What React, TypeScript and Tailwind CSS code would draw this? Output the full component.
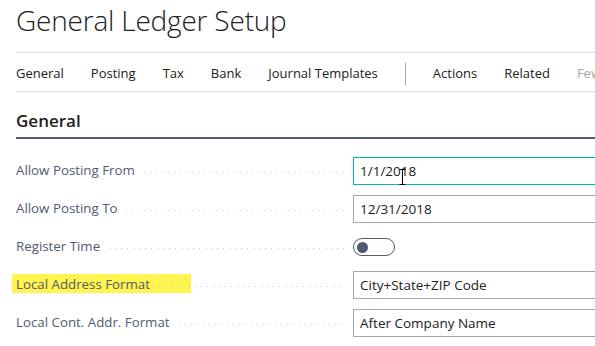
import React from "react";

const Dots = () => (
  <span className="flex-1 h-[1px] ml-[9px] self-center mt-[2px] bg-[linear-gradient(to_right,#c6c6c6_1px,transparent_1px)] bg-[length:6px_1px] bg-repeat-x" />
);

function Row({
  label,
  children,
  highlight,
}: {
  label: string;
  children: React.ReactNode;
  highlight?: boolean;
}) {
  return (
    <div className="flex h-[28px] items-center">
      <div className="relative flex w-[329px] items-center">
        {highlight && (
          <span className="absolute left-[-4px] top-[-1px] h-[19px] w-[179px] bg-[#fff44f]" />
        )}
        <span className="relative text-[13.3px] text-[#505c6d] whitespace-nowrap">{label}</span>
        <span className="relative flex flex-1 self-stretch">
          <Dots />
        </span>
      </div>
      <div className="ml-[8px] flex-1 self-stretch flex items-center">{children}</div>
    </div>
  );
}

function Box({ value, focus, children }: { value: string; focus?: boolean; children?: React.ReactNode }) {
  return (
    <div
      className={
        "relative h-[28px] w-[320px] flex items-center pl-[6px] text-[13.5px] text-[#212121] border " +
        (focus ? "border-[#00b7c3]" : "border-[#a6a6a6]")
      }
    >
      {value}
      {children}
    </div>
  );
}

export default function App() {
  return (
    <div className="w-[595px] h-[346px] overflow-hidden bg-white font-['Open_Sans',sans-serif]">
      <div className="w-[720px] pl-4">
        <div className="h-[52px] pt-[1px] text-[28px] leading-[38px] font-light text-[#212121] tracking-[-0.2px]">
          General Ledger Setup
        </div>
        <div className="flex h-[40px] items-center gap-[27px] border-y border-[#dcdcdc] pt-[3px] text-[13px] text-[#212121]">
          <span>General</span>
          <span>Posting</span>
          <span>Tax</span>
          <span>Bank</span>
          <span>Journal Templates</span>
          <span className="h-[22px] w-px bg-[#a6a6a6]" />
          <span>Actions</span>
          <span>Related</span>
          <span className="text-[#a6a6a6] whitespace-nowrap">Fewer details</span>
        </div>
        <div className="mt-[15px] h-[32px] border-b-2 border-[#505c6d] text-[17px] font-semibold leading-[28px] text-[#212121]">
          General
        </div>
        <div className="mt-[18px] flex flex-col gap-[10px]">
          <Row label="Allow Posting From">
            <Box value="1/1/2018" focus>
              <svg
                className="absolute left-[45px] top-[11px]"
                width="7"
                height="16"
                viewBox="0 0 7 16"
              >
                <path d="M0.5 0.5h6M3.5 0.5v15M0.5 15.5h6" stroke="#000" strokeWidth="1" fill="none" />
              </svg>
            </Box>
          </Row>
          <Row label="Allow Posting To">
            <Box value="12/31/2018" />
          </Row>
          <Row label="Register Time">
            <div className="flex h-[18px] w-[42px] items-center rounded-full border border-[#505c6d] pl-[3px]">
              <span className="h-[11px] w-[11px] rounded-full bg-[#505c6d]" />
            </div>
          </Row>
          <Row label="Local Address Format" highlight>
            <Box value="City+State+ZIP Code" />
          </Row>
          <Row label="Local Cont. Addr. Format">
            <Box value="After Company Name" />
          </Row>
          <Row label="">
            <Box value="" />
          </Row>
        </div>
      </div>
    </div>
  );
}
